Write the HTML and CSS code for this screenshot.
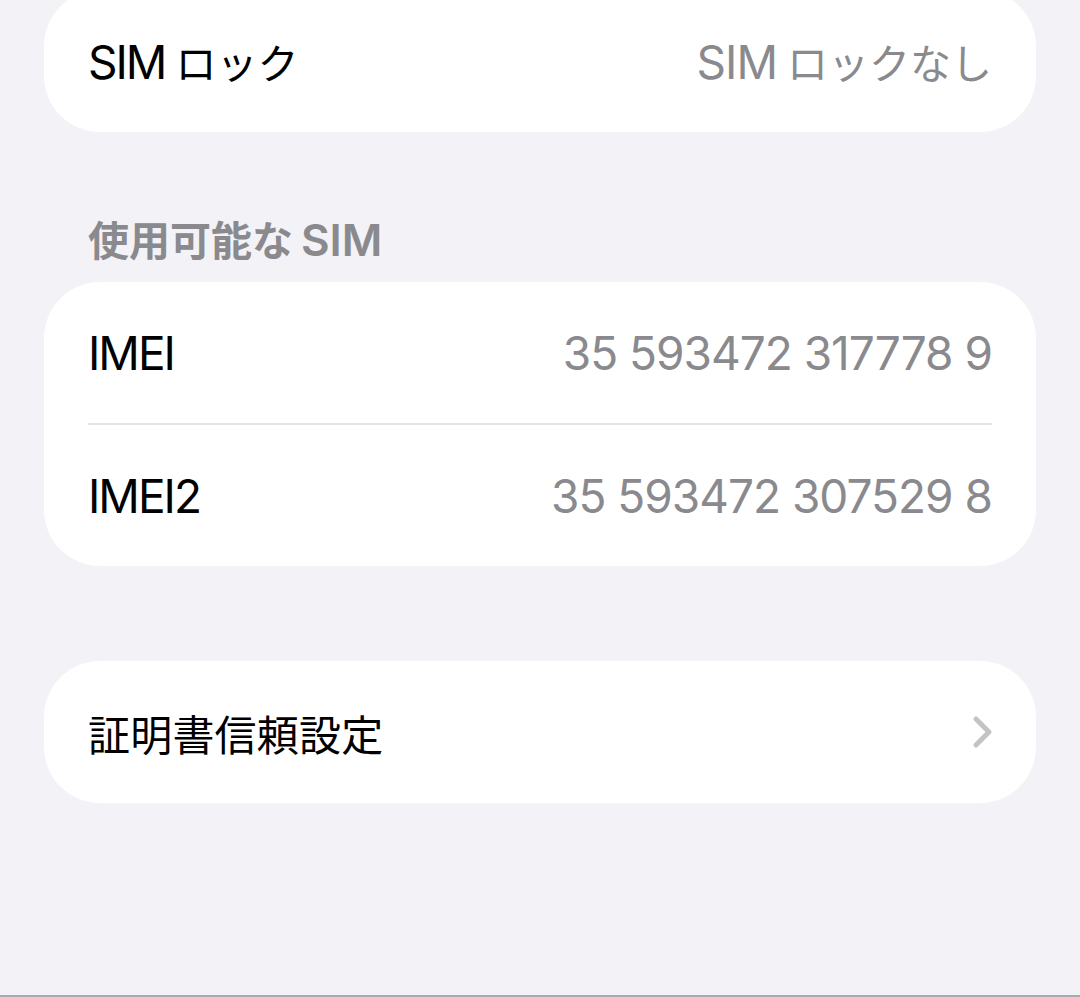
FILE: index.html
```html
<!DOCTYPE html>
<html>
  <head>
    <title>情報</title>
    <meta name="viewport" content="width=device-width, initial-scale=1.0">
    <link rel="stylesheet" href="styles.css">
  </head>
  <body>
    <div class="page">
      <div class="group group-first">
        <div class="row">
          <span class="label">SIM<span class="ja gap">ロック</span></span>
          <span class="value">SIM<span class="ja gap">ロックなし</span></span>
        </div>
      </div>

      <h2 class="section-title"><span class="ja">使用可能な</span><span class="gap">SIM</span></h2>

      <div class="group">
        <div class="row">
          <span class="label">IMEI</span>
          <span class="value num">35 593472 317778 9</span>
        </div>
        <div class="divider"></div>
        <div class="row">
          <span class="label">IMEI2</span>
          <span class="value num">35 593472 307529 8</span>
        </div>
      </div>

      <div class="group group-link">
        <div class="row">
          <span class="label"><span class="ja ja-wide">証明書信頼設定</span></span>
          <svg class="chevron" width="22" height="34" viewBox="0 0 22 34">
            <polyline points="4,4 17,17 4,30" fill="none" stroke="#c4c4c7" stroke-width="5" stroke-linecap="round" stroke-linejoin="round"/>
          </svg>
        </div>
      </div>
    </div>
  </body>
</html>
```

FILE: styles.css
```css
/* Settings list */
body {
  margin: 0;
  background-color: #f2f2f7;
  font-family: "Inter", "Noto Sans CJK JP", sans-serif;
  overflow: hidden;
}

.page {
  display: flow-root;
  height: 997px;
  box-sizing: border-box;
  padding: 0 44px;
  border-bottom: 2px solid #ababaf;
}

.ja {
  font-family: "Noto Sans CJK JP", sans-serif;
  font-size: 41px;
  letter-spacing: 0;
}

.ja-wide {
  font-size: 42px;
  letter-spacing: 0.2px;
}

.gap {
  margin-left: 10px;
}

.group {
  background-color: #fff;
  border-radius: 56px;
  padding: 0 44px;
}

.group-first {
  margin-top: -10px;
}

.group-link {
  margin-top: 95px;
}

.row {
  display: flex;
  align-items: center;
  justify-content: space-between;
  height: 141px;
}

.group-first .row,
.group-link .row {
  height: 142px;
}

.label {
  font-size: 46px;
  color: #000;
  letter-spacing: -2px;
  white-space: nowrap;
}

.value {
  font-size: 46px;
  color: #8a8a8e;
  letter-spacing: -1px;
  white-space: nowrap;
}

.divider {
  height: 2px;
  background-color: #e3e3e8;
}

.section-title {
  margin: 76px 0 14px;
  padding-left: 44px;
  height: 60px;
  line-height: 60px;
  font-size: 44px;
  font-weight: 600;
  color: #8a8a8e;
}

.section-title .gap {
  margin-left: 8px;
}

.chevron {
  margin-right: -2px;
}
```
